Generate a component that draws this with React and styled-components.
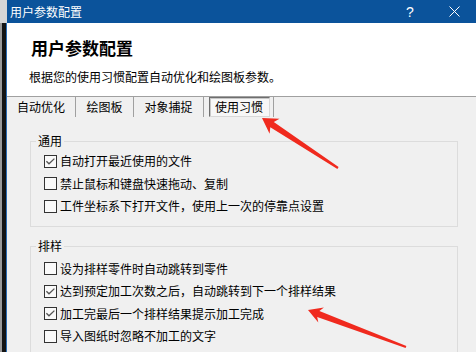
import React from 'react';
import styled, { createGlobalStyle } from 'styled-components';

const GlobalStyle = createGlobalStyle`
  html, body {
    margin: 0;
    padding: 0;
    width: 476px;
    height: 352px;
    overflow: hidden;
    background: #f0f0f0;
  }
  body {
    font-family: "Noto Sans CJK SC", "Noto Sans", sans-serif;
    font-size: 12px;
    color: #000;
  }
`;

const Screen = styled.div`
  position: relative;
  display: flex;
  width: 476px;
  height: 352px;
  overflow: hidden;
`;

const LeftStrip = styled.div`
  width: 7px;
  flex-shrink: 0;
  display: flex;
  flex-direction: column;
`;

const StripTop = styled.div`
  height: 23px;
  flex-shrink: 0;
  background: #d6d6d6;
`;

const StripBody = styled.div`
  flex: 1;
  background: #141414;
  border-left: 2px solid #9a9a9a;
  border-right: 1px solid #2a6cb4;
`;

const Dialog = styled.div`
  flex: 1;
  display: flex;
  flex-direction: column;
  background: #f0f0f0;
  min-height: 0;
`;

const TitleBar = styled.div`
  height: 23px;
  flex-shrink: 0;
  display: flex;
  align-items: center;
  background: #0b539b;
  color: #fff;
  padding-left: 3px;
`;

const TitleText = styled.div`
  flex: 1;
  font-size: 12px;
  line-height: 14px;
`;

const CaptionButton = styled.div`
  width: 44px;
  height: 23px;
  display: flex;
  align-items: center;
  justify-content: center;
  font-family: "Liberation Sans", sans-serif;
  font-size: 14px;
`;

const Header = styled.div`
  height: 74px;
  flex-shrink: 0;
  box-sizing: border-box;
  background: #fff;
  border-bottom: 1px solid #a0a0a0;
  padding: 14px 0 0 24px;
`;

const Heading = styled.div`
  font-size: 17px;
  font-weight: 700;
  line-height: 22px;
`;

const Subtitle = styled.div`
  margin-top: 10px;
  margin-left: -2px;
  font-size: 12px;
  line-height: 16px;
`;

const TabBar = styled.div`
  display: flex;
  flex-shrink: 0;
  height: 21px;
`;

const Tab = styled.div`
  width: ${p => p.$w}px;
  height: 20px;
  border-right: 1px solid #a0a0a0;
  display: flex;
  align-items: center;
  justify-content: center;
  font-size: 12px;
  line-height: 14px;
`;

const ActiveTab = styled.div`
  width: 59px;
  height: 18px;
  margin-left: 1px;
  display: flex;
  align-items: center;
  justify-content: center;
  border: 1px solid #6e6e6e;
  border-right-color: #d8d8d8;
  border-bottom-color: #d8d8d8;
  background: #f7f7f7;
  box-shadow: inset 1px 1px 0 #c8c8c8;
`;

const Content = styled.div`
  flex-shrink: 0;
  padding: 0 18px 0 23px;
`;

const Group = styled.div`
  margin-top: ${p => p.$mt}px;
  border: 1px solid #dcdcdc;
  border-bottom-width: ${p => (p.$open ? 0 : 1)}px;
  padding: 0 0 ${p => p.$pb}px 13px;
`;

const GroupTitle = styled.div`
  width: fit-content;
  margin: -8px 0 0 -8px;
  padding: 0 2px;
  background: #f0f0f0;
  line-height: 14px;
`;

const Options = styled.div`
  padding-top: ${p => p.$pt}px;
  display: flex;
  flex-direction: column;
`;

const Row = styled.label`
  height: 22.5px;
  display: flex;
  align-items: center;
  gap: 3px;
  line-height: 14px;
  white-space: nowrap;
`;

const Overlay = styled.svg`
  position: absolute;
  left: 0;
  top: 0;
  pointer-events: none;
`;

const CheckBox = ({ checked }) => (
  <svg width="13" height="13" viewBox="0 0 13 13">
    <rect x="0.5" y="0.5" width="12" height="12" fill="#fafafa" stroke="#333" />
    {checked && (
      <path d="M2.4 6.2 L5 8.8 L10.4 3.6" fill="none" stroke="#555" strokeWidth="1.3" />
    )}
  </svg>
);

const Option = ({ checked, children }) => (
  <Row>
    <CheckBox checked={checked} />
    <span>{children}</span>
  </Row>
);

function arrowPoints(tip, tail, headLen, headHalf) {
  const dx = tail[0] - tip[0];
  const dy = tail[1] - tip[1];
  const len = Math.hypot(dx, dy);
  const d = [dx / len, dy / len];
  const n = [-d[1], d[0]];
  const at = (a, b) => [tip[0] + d[0] * a + n[0] * b, tip[1] + d[1] * a + n[1] * b];
  const pts = [
    tip,
    at(headLen, headHalf),
    at(headLen - 3, 3.2),
    at(len, 1.1),
    at(len, -1.1),
    at(headLen - 3, -3.2),
    at(headLen, -headHalf),
  ];
  return pts.map(p => p.map(v => v.toFixed(1)).join(',')).join(' ');
}

const general = [
  { text: '自动打开最近使用的文件', checked: true },
  { text: '禁止鼠标和键盘快速拖动、复制', checked: false },
  { text: '工件坐标系下打开文件，使用上一次的停靠点设置', checked: false },
];

const nesting = [
  { text: '设为排样零件时自动跳转到零件', checked: false },
  { text: '达到预定加工次数之后，自动跳转到下一个排样结果', checked: true },
  { text: '加工完最后一个排样结果提示加工完成', checked: true },
  { text: '导入图纸时忽略不加工的文字', checked: false },
];

export default function App() {
  return (
    <Screen>
      <GlobalStyle />
      <LeftStrip>
        <StripTop />
        <StripBody />
      </LeftStrip>
      <Dialog>
        <TitleBar>
          <TitleText>用户参数配置</TitleText>
          <CaptionButton>?</CaptionButton>
          <CaptionButton>
            <svg width="11" height="11" viewBox="0 0 11 11">
              <path d="M0.5 0.5 L10.5 10.5 M10.5 0.5 L0.5 10.5" stroke="#fff" strokeWidth="1" />
            </svg>
          </CaptionButton>
        </TitleBar>
        <Header>
          <Heading>用户参数配置</Heading>
          <Subtitle>根据您的使用习惯配置自动优化和绘图板参数。</Subtitle>
        </Header>
        <TabBar>
          <Tab $w={68}>自动优化</Tab>
          <Tab $w={57}>绘图板</Tab>
          <Tab $w={69}>对象捕捉</Tab>
          <Tab $w={69}>
            <ActiveTab>使用习惯</ActiveTab>
          </Tab>
        </TabBar>
        <Content>
          <Group $mt={23} $pb={8}>
            <GroupTitle>通用</GroupTitle>
            <Options $pt={2}>
              {general.map(o => (
                <Option key={o.text} checked={o.checked}>{o.text}</Option>
              ))}
            </Options>
          </Group>
          <Group $mt={19} $pb={10} $open>
            <GroupTitle>排样</GroupTitle>
            <Options $pt={5}>
              {nesting.map(o => (
                <Option key={o.text} checked={o.checked}>{o.text}</Option>
              ))}
            </Options>
          </Group>
        </Content>
      </Dialog>
      <Overlay width="476" height="352" viewBox="0 0 476 352">
        <polygon points={arrowPoints([262, 118], [338, 168], 15, 9)} fill="#f02a1e" />
        <polygon points={arrowPoints([308, 310], [406, 347], 14, 8)} fill="#f02a1e" />
      </Overlay>
    </Screen>
  );
}
